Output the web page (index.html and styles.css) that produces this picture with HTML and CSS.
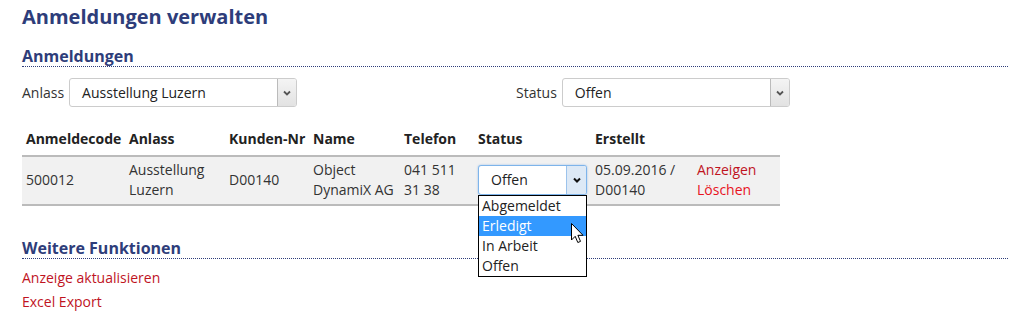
FILE: index.html
```html
<!DOCTYPE html>
<html lang="de">
<head>
  <meta charset="UTF-8" />
  <title>Anmeldungen verwalten</title>
  <link rel="stylesheet" href="styles.css">
</head>
<body>
  <div class="page">
    <h1>Anmeldungen verwalten</h1>

    <h2>Anmeldungen</h2>
    <div class="filter">
      <div class="filter-item">
        <label>Anlass</label>
        <div class="select wide">
          <span class="select-text">Ausstellung Luzern</span>
          <span class="select-btn"><svg width="8" height="6" viewBox="0 0 8 6"><path d="M1 1.5 L4 4.5 L7 1.5" fill="none" stroke="#555" stroke-width="1.8"/></svg></span>
        </div>
      </div>
      <div class="filter-item">
        <label>Status</label>
        <div class="select wide">
          <span class="select-text">Offen</span>
          <span class="select-btn"><svg width="8" height="6" viewBox="0 0 8 6"><path d="M1 1.5 L4 4.5 L7 1.5" fill="none" stroke="#555" stroke-width="1.8"/></svg></span>
        </div>
      </div>
    </div>

    <table class="liste">
      <colgroup>
        <col class="c1"><col class="c2"><col class="c3"><col class="c4">
        <col class="c5"><col class="c6"><col class="c7"><col class="c8">
      </colgroup>
      <thead>
        <tr>
          <th>Anmeldecode</th><th>Anlass</th><th>Kunden-Nr</th><th>Name</th>
          <th>Telefon</th><th>Status</th><th>Erstellt</th><th></th>
        </tr>
      </thead>
      <tbody>
        <tr>
          <td>500012</td>
          <td>Ausstellung Luzern</td>
          <td>D00140</td>
          <td>Object DynamiX AG</td>
          <td>041 511 31 38</td>
          <td>
            <div class="status-wrap">
              <div class="select small focus">
                <span class="select-text">Offen</span>
                <span class="select-btn"><svg width="8" height="6" viewBox="0 0 8 6"><path d="M1 1.5 L4 4.5 L7 1.5" fill="none" stroke="#111" stroke-width="2"/></svg></span>
              </div>
              <ul class="dropdown">
                <li>Abgemeldet</li>
                <li class="active">Erledigt</li>
                <li>In Arbeit</li>
                <li>Offen</li>
              </ul>
              <svg class="cursor" width="15" height="23" viewBox="0 0 15 23">
                <path d="M0.5 0.5 L0.5 17 L4.2 13.3 L6.8 19.5 L9.5 18.4 L6.9 12.3 L12 12.3 Z" fill="#fff" stroke="#000" stroke-width="1" stroke-linejoin="round"/>
              </svg>
            </div>
          </td>
          <td>05.09.2016 / D00140</td>
          <td><a href="#" class="link">Anzeigen</a><br><a href="#" class="link del">Löschen</a></td>
        </tr>
      </tbody>
    </table>

    <h2 class="weitere">Weitere Funktionen</h2>
    <div class="funktionen">
      <a href="#" class="link">Anzeige aktualisieren</a>
      <a href="#" class="link">Excel Export</a>
    </div>
  </div>
</body>
</html>
```

FILE: styles.css
```css
body {
  margin: 0;
  font-family: "Open Sans", Arial, sans-serif;
  font-size: 14px;
  color: #333;
  background: #fff;
}

.page {
  padding: 3px 8px 0 22px;
}

h1 {
  font-size: 20px;
  line-height: 28px;
  margin: 0 0 16px 0;
  color: #2e3d7a;
  font-weight: bold;
}

h2 {
  font-size: 16px;
  line-height: 19px;
  margin: 0;
  color: #2e3d7a;
  font-weight: bold;
  border-bottom: 1px dotted #2e3d7a;
  padding-bottom: 0;
}

.filter {
  display: flex;
  margin-top: 11px;
}

.filter-item {
  display: flex;
  align-items: center;
  gap: 5px;
}

.filter-item + .filter-item {
  margin-left: 219px;
}

.filter-item label {
  color: #333;
}

.select {
  display: flex;
  align-items: stretch;
  height: 29px;
  box-sizing: border-box;
  border: 1px solid #ccc;
  border-radius: 3px;
  background: #fff;
}

.select.wide {
  width: 228px;
}

.select-text {
  flex: 1;
  padding-left: 12px;
  line-height: 27px;
  color: #222;
}

.select-btn {
  width: 18px;
  border-left: 1px solid #bbb;
  background: linear-gradient(#f4f4f4, #e2e2e2);
  display: flex;
  align-items: center;
  justify-content: center;
  border-radius: 0 2px 2px 0;
}

.liste {
  margin-top: 17px;
  border-collapse: collapse;
  table-layout: fixed;
  width: 758px;
}

.c1 { width: 103px; }
.c2 { width: 100px; }
.c3 { width: 84px; }
.c4 { width: 91px; }
.c5 { width: 74px; }
.c6 { width: 117px; }
.c7 { width: 102px; }
.c8 { width: 87px; }

.liste th {
  text-align: left;
  font-weight: bold;
  color: #222;
  padding: 5px 4px 6px 4px;
  line-height: 20px;
  border-bottom: 2px solid #bbb;
  white-space: nowrap;
}

.liste td {
  background: #f1f1f1;
  padding: 3px 4px 4px 4px;
  line-height: 20px;
  vertical-align: middle;
  border-bottom: 2px solid #bbb;
}

.status-wrap {
  position: relative;
}

.select.small {
  width: 109px;
  height: 30px;
  border-radius: 3px;
}

.select.focus {
  border: 1px solid #7eb4ea;
  box-shadow: 0 0 2px rgba(80, 150, 230, 0.6);
}

.select.small .select-btn {
  background: #dde9f6;
  border-left: 1px solid #9cc3ec;
  width: 19px;
}

.dropdown {
  position: absolute;
  top: 30px;
  left: 0;
  width: 109px;
  box-sizing: border-box;
  margin: 0;
  padding: 0;
  list-style: none;
  background: #fff;
  border: 1px solid #000;
  z-index: 2;
}

.dropdown li {
  padding-left: 3px;
  line-height: 20px;
  color: #222;
}

.dropdown li.active {
  background: #3399ff;
  color: #fff;
}

.cursor {
  position: absolute;
  left: 93px;
  top: 58px;
  z-index: 3;
}

.link {
  color: #c0141f;
  text-decoration: none;
}

.link.del {
  color: #e8131f;
}

.weitere {
  margin-top: 33px;
}

.funktionen {
  display: flex;
  flex-direction: column;
  align-items: flex-start;
  gap: 5px;
  margin-top: 9px;
}
```
